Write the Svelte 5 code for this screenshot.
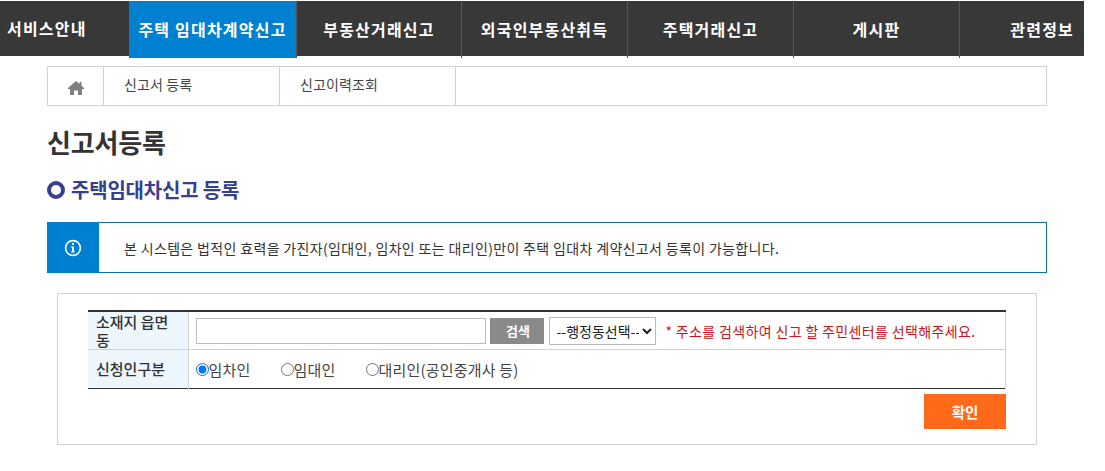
<script>
  const navItems = [
    { label: '서비스안내', cls: 'first' },
    { label: '주택 임대차계약신고', cls: 'active' },
    { label: '부동산거래신고' },
    { label: '외국인부동산취득' },
    { label: '주택거래신고' },
    { label: '게시판' },
    { label: '관련정보', cls: 'last' }
  ];
</script>

<div class="page">
  <nav class="gnb">
    {#each navItems as item}
      <a class="gnb__item {item.cls ?? ''}" href="#top">{item.label}</a>
    {/each}
  </nav>

  <div class="container">
    <div class="tabs">
      <div class="tabs__home">
        <svg width="16" height="14" viewBox="0 0 16 14"><path d="M8 0 L11.5 3 V1 H13.5 V4.8 L16 7 V8 H14 V14 H10 V9.5 H6 V14 H2 V8 H0 V7 Z" fill="#7f7f7f"/></svg>
      </div>
      <a class="tabs__item" href="#top">신고서 등록</a>
      <a class="tabs__item" href="#top">신고이력조회</a>
    </div>

    <h1 class="title">신고서등록</h1>
    <h2 class="subtitle"><span class="subtitle__dot"></span>주택임대차신고 등록</h2>

    <div class="notice">
      <div class="notice__icon">
        <svg width="18" height="18" viewBox="0 0 18 18" fill="none">
          <circle cx="9" cy="9" r="7.4" stroke="#fff" stroke-width="1.6"/>
          <rect x="8" y="4" width="2" height="2" fill="#fff"/>
          <path d="M7 7.5 H10 V12.6 H11 V13.6 H7 V12.6 H8 V8.5 H7 Z" fill="#fff"/>
        </svg>
      </div>
      <p class="notice__text">본 시스템은 법적인 효력을 가진자(임대인, 임차인 또는 대리인)만이 주택 임대차 계약신고서 등록이 가능합니다.</p>
    </div>

    <div class="form-box">
      <table class="form-table">
        <tbody>
          <tr>
            <th>소재지 읍면동</th>
            <td>
              <div class="addr">
                <input class="addr__input" type="text" />
                <button class="addr__btn" type="button">검색</button>
                <select class="addr__select"><option>--행정동선택--</option></select>
                <span class="addr__help">* 주소를 검색하여 신고 할 주민센터를 선택해주세요.</span>
              </div>
            </td>
          </tr>
          <tr>
            <th>신청인구분</th>
            <td>
              <div class="radios">
                <label><input type="radio" name="kind" checked />임차인</label>
                <label><input type="radio" name="kind" />임대인</label>
                <label><input type="radio" name="kind" />대리인(공인중개사 등)</label>
              </div>
            </td>
          </tr>
        </tbody>
      </table>
      <div class="actions">
        <button class="confirm" type="button">확인</button>
      </div>
    </div>
  </div>
</div>

<style>
  :global(body) {
    background: #fff;
    font-family: "Noto Sans CJK KR", "Noto Sans", sans-serif;
    color: #333;
  }
  .page { width: 1105px; padding-top: 1px; }

  .gnb {
    display: grid;
    grid-template-columns: 129px 167px 165px 166px 166px 166px 125px;
    width: 1084px;
    height: 55px;
    background: #383838;
  }
  .gnb__item {
    display: flex;
    align-items: center;
    justify-content: center;
    padding-bottom: 1px;
    box-sizing: border-box;
    height: 57px;
    color: #fff;
    font-size: 16px;
    font-weight: 700;
    letter-spacing: 1.2px;
    text-decoration: none;
    white-space: nowrap;
    border-left: 1px solid #555;
  }
  .gnb__item.first { justify-content: flex-start; padding-left: 7px; border-left: 0; height: 55px; }
  .gnb__item.last { justify-content: flex-end; padding-right: 10px; }
  .gnb__item.active { background: #0080d0; border-left: 0; }

  .container { width: 1000px; margin-left: 47px; }

  .tabs {
    display: flex;
    height: 40px;
    margin-top: 10px;
    box-sizing: border-box;
    border: 1px solid #d2d2d2;
  }
  .tabs__home {
    width: 56px;
    display: flex;
    align-items: center;
    justify-content: center;
    border-right: 1px solid #d2d2d2;
    padding-top: 3px;
    box-sizing: border-box;
  }
  .tabs__item {
    width: 176px;
    box-sizing: border-box;
    padding-left: 20px;
    border-right: 1px solid #d2d2d2;
    font-size: 14px;
    letter-spacing: 0.1px;
    line-height: 35px;
    color: #444;
    text-decoration: none;
  }

  .title {
    margin: 19px 0 0;
    font-size: 26px;
    letter-spacing: -0.2px;
    line-height: 34px;
    font-weight: 700;
    color: #333;
  }
  .subtitle {
    display: flex;
    align-items: center;
    margin: 18px 0 0;
    font-size: 20px;
    letter-spacing: -0.2px;
    line-height: 26px;
    font-weight: 700;
    color: #36408f;
  }
  .subtitle__dot {
    width: 18px;
    height: 18px;
    box-sizing: border-box;
    border: 4px solid #36408f;
    border-radius: 50%;
    margin-right: 6px;
  }

  .notice {
    display: flex;
    align-items: center;
    height: 51px;
    margin-top: 19px;
    box-sizing: border-box;
    border: 1px solid #0f6ea8;
    border-left: 0;
  }
  .notice__icon {
    width: 52px;
    height: 51px;
    margin-top: -1px;
    margin-bottom: -1px;
    background: #0080d0;
    display: flex;
    align-items: center;
    justify-content: center;
  }
  .notice__text {
    margin: 0 0 0 25px;
    font-size: 14px;
    letter-spacing: 0.34px;
    color: #333;
    white-space: nowrap;
  }

  .form-box {
    margin: 20px 10px 0;
    height: 152px;
    box-sizing: border-box;
    border: 1px solid #d2d2d2;
    padding: 16px 30px 0;
  }
  .form-table {
    width: 918px;
    border-collapse: collapse;
    table-layout: fixed;
    border-top: 2px solid #333;
    border-bottom: 1px solid #333;
    font-size: 13px;
  }
  .form-table th {
    width: 100px;
    box-sizing: border-box;
    background: #edf6fd;
    border-right: 1px solid #d2d2d2;
    text-align: left;
    padding: 0 8px;
    font-weight: 500;
    font-size: 15px;
    line-height: 18px;
    color: #333;
  }
  .form-table td { padding: 0 0 0 7px; border-right: 1px solid #d2d2d2; }
  .form-table tr:first-child th, .form-table tr:first-child td {
    height: 37px;
    border-bottom: 1px solid #d2d2d2;
  }
  .form-table tr:last-child th, .form-table tr:last-child td { height: 38px; }

  .addr { display: flex; align-items: center; }
  .addr__input {
    width: 290px;
    height: 26px;
    box-sizing: border-box;
    border: 1px solid #bbb;
    padding: 0;
    margin-right: 4px;
  }
  .addr__btn {
    width: 54px;
    height: 26px;
    border: 0;
    padding: 0 0 0 3px;
    background: #8a8a8a;
    color: #fff;
    font-family: inherit;
    font-size: 13px;
    font-weight: 700;
    margin-right: 5px;
  }
  .addr__select {
    width: 107px;
    height: 28px;
    border: 1px solid #bbb;
    background: #fff;
    font-family: inherit;
    font-size: 14px;
    color: #222;
    padding: 0 0 0 3px;
    margin-right: 10px;
  }
  .addr__help { color: #c8161d; font-size: 14px; letter-spacing: 0.35px; white-space: nowrap; }

  .radios { display: flex; gap: 30px; font-size: 15px; letter-spacing: 0.2px; color: #444; }
  .radios label { display: flex; align-items: center; }
  .radios input { margin: 0; width: 13px; height: 13px; }

  .actions { display: flex; justify-content: flex-end; width: 918px; margin-top: 5px; }
  .confirm {
    width: 82px;
    height: 35px;
    border: 0;
    background: #ff6a1a;
    color: #fff;
    font-family: inherit;
    font-size: 14.5px;
    font-weight: 700;
  }
</style>
